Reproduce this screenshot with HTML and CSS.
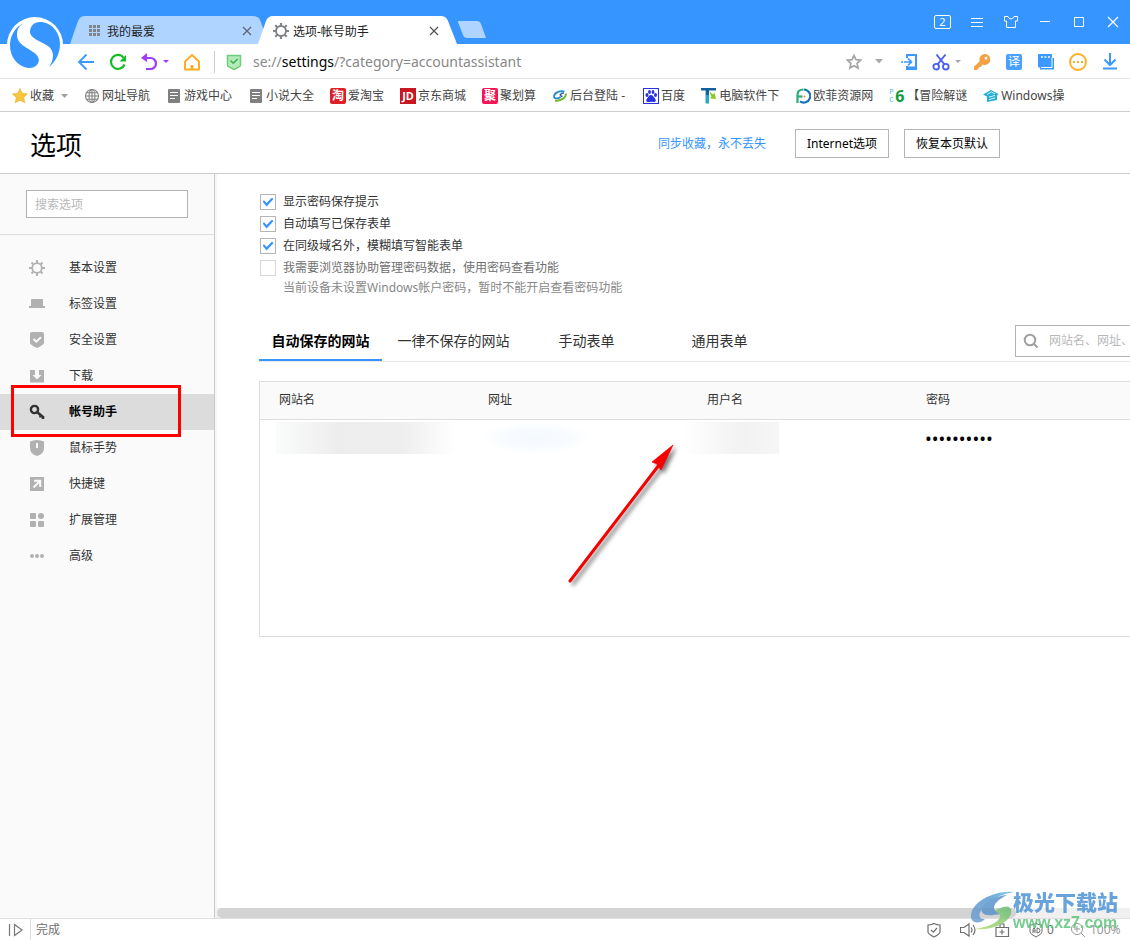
FILE: index.html
```html
<!DOCTYPE html>
<html lang="zh-CN">
<head>
<meta charset="utf-8">
<meta name="viewport" content="width=device-width, initial-scale=1">
<title>选项-帐号助手</title>
<link rel="stylesheet" href="styles.css">
</head>
<body>
<div class="browser">
  <header class="titlebar">
    <svg class="logo" viewBox="0 0 70 76" aria-hidden="true">
      <circle cx="35" cy="45" r="28" fill="#fff"/>
      <path fill="#3695ff" d="M24 23C15 27 10 36 10 45C10 57 17 66 28 68C36 69 41 62 38 57C34 49 17 47 17 35C17 29 19 26 24 23Z"/>
      <path fill="#3695ff" d="M40 22C51 22 60 32 60 44C60 53 56 61 49 67C54 60 55 51 48 46C40 41 30 38 30 32C30 26 34 22 40 22Z"/>
    </svg>
    <nav class="tabs" aria-label="标签页">
      <div class="tab">
        <svg class="tab-shape" viewBox="0 0 195 28" preserveAspectRatio="none"><path fill="#afd4ff" d="M0 28L8 5Q10 0 15 0H183Q188 0 190 4L195 17V28Z"/></svg>
        <svg class="tab-icon" viewBox="0 0 16 16" fill="#808488"><path d="M2 2h3v3H2zM6 2h3v3H6zM10 2h3v3h-3zM2 6h3v3H2zM6 6h3v3H6zM10 6h3v3h-3zM2 10h3v3H2zM6 10h3v3H6zM10 10h3v3h-3z"/></svg>
        <span class="tab-title">我的最爱</span>
        <button class="tab-close" aria-label="关闭"><svg viewBox="0 0 10 10"><path d="M1 1l8 8M9 1L1 9" stroke="#606468" stroke-width="1.200" fill="none"/></svg></button>
      </div>
      <div class="tab tab-active">
        <svg class="tab-shape" viewBox="0 0 199 28" preserveAspectRatio="none"><path fill="#fff" d="M0 28L8 5Q10 0 15 0H183Q188 0 190 5L199 28Z"/></svg>
        <svg class="tab-icon" viewBox="0 0 16 16"><use href="#gear"/></svg>
        <span class="tab-title">选项-帐号助手</span>
        <button class="tab-close" aria-label="关闭"><svg viewBox="0 0 10 10"><path d="M1 1l8 8M9 1L1 9" stroke="#505050" stroke-width="1.200" fill="none"/></svg></button>
      </div>
      <button class="new-tab" aria-label="新标签页"><svg viewBox="0 0 28 18"><path fill="#afd4ff" d="M0 0H19Q22 0 23 3L28 17H9Q6 17 5 14L0 1Z"/></svg></button>
    </nav>
    <div class="window-controls">
      <button class="win-count">2</button>
      <button aria-label="菜单"><svg viewBox="0 0 16 16"><path d="M2 4.500h12M2 8.500h12M2 12.500h12" stroke="#fff" fill="none"/></svg></button>
      <button aria-label="皮肤"><svg viewBox="0 0 16 16"><path d="M1.500 2.500H5Q6 5 8 5T11 2.500h3.500V7h-2v6.500h-9V7h-2z" stroke="#fff" fill="none"/></svg></button>
      <button aria-label="最小化"><svg viewBox="0 0 16 16"><path d="M3 7.500h10" stroke="#fff"/></svg></button>
      <button aria-label="最大化"><svg viewBox="0 0 16 16"><path d="M3.500 3.500h9v9h-9z" stroke="#fff" fill="none"/></svg></button>
      <button aria-label="关闭窗口"><svg viewBox="0 0 16 16"><path d="M3 3l10 10M13 3L3 13" stroke="#fff" stroke-width="1.200" fill="none"/></svg></button>
    </div>
  </header>

  <div class="toolbar">
    <button class="tool" aria-label="后退"><svg viewBox="0 0 18 18"><path d="M17 9H2M9.500 1.500L2 9l7.500 7.500" stroke="#3b98ff" stroke-width="1.800" fill="none"/></svg></button>
    <button class="tool" aria-label="刷新"><svg viewBox="0 0 18 18"><path d="M15.500 11.500A7 7 0 1 1 14.500 4.600" stroke="#12bd25" stroke-width="2.200" fill="none"/><path d="M17 2v6.500h-6.500z" fill="#12bd25"/></svg></button>
    <button class="tool tool-undo" aria-label="撤销"><svg viewBox="0 0 18 18"><path d="M4 5h6.500a5.500 5.500 0 0 1 0 11H6" stroke="#a13cf5" stroke-width="2.200" fill="none"/><path d="M1 5l6-5v9z" fill="#a13cf5"/></svg><svg class="caret" viewBox="0 0 6 4"><path d="M0 0h6L3 3z" fill="#a13cf5"/></svg></button>
    <button class="tool" aria-label="主页"><svg viewBox="0 0 18 18"><path d="M2 8.500L9 2l7 6.500V16.500H2z" stroke="#ffae22" stroke-width="2" fill="none" stroke-linejoin="round"/><path d="M7.500 12h3v5h-3z" fill="#ffae22"/></svg></button>
    <span class="divider"></span>
    <svg class="safe" viewBox="0 0 16 16"><path d="M1.500 1.500h13V11q0 1-1 1.600L8 15.500l-5.500-2.900q-1-.6-1-1.600z" fill="#b5eab9" stroke="#6fce7b" stroke-width="1.500"/><path d="M4.500 6.500l2.700 2.700L11.700 5" stroke="#43b154" stroke-width="1.600" fill="none"/></svg>
    <div class="url" role="textbox" aria-label="地址">se://<b>settings</b>/?category=accountassistant</div>
    <button class="tool tool-star" aria-label="收藏"><svg viewBox="0 0 18 18"><path d="M9 2.500l2 4.200 4.600.5-3.500 3.200 1 4.600L9 12.700 4.900 15l1-4.600-3.500-3.200 4.600-.5z" fill="none" stroke="#a5a5a5" stroke-width="1.700"/></svg></button>
    <button class="tool tool-caret" aria-label="更多收藏"><svg class="caret-big" viewBox="0 0 8 5"><path d="M0 0h8L4 4.500z" fill="#a8a8a8"/></svg></button>
    <button class="tool" aria-label="发送到手机"><svg viewBox="0 0 18 18"><path d="M7 5V2h9v14H7v-3" stroke="#3b98ff" stroke-width="2" fill="none"/><path d="M1 9h2M4 9h7M8 5.500L11.500 9 8 12.500" stroke="#3b98ff" stroke-width="1.700" fill="none"/><path d="M7 14.500h9" stroke="#3b98ff" stroke-width="2"/></svg></button>
    <button class="tool tool-cut" aria-label="截图"><svg viewBox="0 0 18 18"><path d="M4.500 1.500l8 10M13.500 1.500l-8 10" stroke="#4860f3" stroke-width="2" fill="none"/><circle cx="4.200" cy="13.700" r="2.800" stroke="#4860f3" stroke-width="1.900" fill="none"/><circle cx="13.800" cy="13.700" r="2.800" stroke="#4860f3" stroke-width="1.900" fill="none"/></svg><svg class="caret" viewBox="0 0 6 4"><path d="M0 0h6L3 3z" fill="#a8a8a8"/></svg></button>
    <button class="tool" aria-label="密码"><svg viewBox="0 0 18 18"><path fill-rule="evenodd" d="M11.500 1a5.500 5.500 0 1 1-1.800 10.600L7.500 14H6v1.500H4.500V17H1v-3.200l5.700-5.600A5.500 5.500 0 0 1 11.500 1zm1.500 2.700a1.500 1.500 0 1 0 .1 3 1.500 1.500 0 0 0-.1-3z" fill="#f3a141"/></svg></button>
    <button class="tool" aria-label="翻译"><span class="translate">译</span></button>
    <button class="tool" aria-label="多窗口"><svg viewBox="0 0 18 18"><path d="M3 5v11.500h14V5z" fill="#3b98ff"/><rect x="1" y="1" width="14" height="13.500" rx="1" fill="#3b98ff"/><path d="M15 4.500v10H4" stroke="#fff" fill="none"/><path d="M4 3h2v2H4zM7.500 3h2v2h-2zM11 3h2v2h-2z" fill="#c9e2ff"/></svg></button>
    <button class="tool" aria-label="更多"><svg viewBox="0 0 18 18"><circle cx="9" cy="9" r="8" stroke="#ffae22" stroke-width="1.900" fill="none"/><path d="M4 8h2v2H4zM8 8h2v2H8zM12 8h2v2h-2z" fill="#ffae22"/></svg></button>
    <button class="tool" aria-label="下载"><svg viewBox="0 0 18 18"><path d="M9 0v12M3.500 6.500L9 12l5.500-5.500M2 15.500h14" stroke="#3b98ff" stroke-width="2" fill="none"/></svg></button>
  </div>

  <nav class="bookmarks" aria-label="收藏栏">
    <a class="bookmark" href="#"><svg viewBox="0 0 16 16"><path d="M8 .5l2.300 4.800 5.200.6-3.800 3.600 1 5.300L8 12.200l-4.700 2.600 1-5.300L.5 5.900l5.200-.6z" fill="#f7c63c" stroke="#e9b23c" stroke-width=".7"/></svg>收藏<svg class="bookmark-caret" viewBox="0 0 7 5"><path d="M0 0h7L3.500 4z" fill="#a0a0a0"/></svg></a>
    <a class="bookmark" href="#"><svg viewBox="0 0 16 16" fill="none" stroke="#808080" stroke-width="1.100"><circle cx="8" cy="8" r="6.500"/><ellipse cx="8" cy="8" rx="3" ry="6.500"/><path d="M8 1.500v13M1.500 8h13M2.500 4.700h11M2.500 11.300h11"/></svg>网址导航</a>
    <a class="bookmark" href="#"><svg viewBox="0 0 16 16"><use href="#doc"/></svg>游戏中心</a>
    <a class="bookmark" href="#"><svg viewBox="0 0 16 16"><use href="#doc"/></svg>小说大全</a>
    <a class="bookmark" href="#"><span class="badge badge-tao">淘</span>爱淘宝</a>
    <a class="bookmark" href="#"><span class="badge badge-jd">JD</span>京东商城</a>
    <a class="bookmark" href="#"><span class="badge badge-ju">聚</span>聚划算</a>
    <a class="bookmark bookmark-admin" href="#"><svg viewBox="0 0 16 16" fill="none"><path d="M12.500 3.500C8 2 2 5 2 8.500c0 2.500 4 2.500 6.500.5" stroke="#258ed0" stroke-width="1.800"/><path d="M13.500 5.500C15 9 9 13.500 3 12.500" stroke="#75b72c" stroke-width="2"/><path d="M12 5C8 5 7 8 10.500 8.500" stroke="#285da3" stroke-width="1.500"/></svg>后台登陆 -</a>
    <a class="bookmark" href="#"><svg viewBox="0 0 16 16"><rect x=".5" y=".5" width="15" height="15" fill="#fff" stroke="#2932e1"/><g fill="#2932e1"><ellipse cx="4" cy="7" rx="1.500" ry="2"/><ellipse cx="6.500" cy="4" rx="1.400" ry="2"/><ellipse cx="10" cy="4" rx="1.400" ry="2"/><ellipse cx="12.500" cy="7" rx="1.500" ry="2"/><path d="M8 7c2 0 2.500 2 4 3.500s.8 4-1.500 3.500q-2.500-.6-5 0C3.200 14.500 2.500 12 4 10.500S6 7 8 7z"/></g></svg>百度</a>
    <a class="bookmark" href="#"><svg viewBox="0 0 16 16"><path d="M4.500 1H8v14.500H4.500z" fill="#2aa5c9"/><path d="M0 0h15v2.500H8V7H5V2.500H0z" fill="#14609f"/><path d="M8 3l4 3.500 1.500-2L15 11l-6-.5 1.500-2z" fill="#86cc24"/></svg>电脑软件下</a>
    <a class="bookmark" href="#"><svg viewBox="0 0 16 16" fill="none" stroke-width="2.200"><path d="M2.500 15V7q0-5.500 6-5.500" stroke="#29ae79"/><path d="M9 1.500A6.500 6.500 0 1 1 5 13.300" stroke="#1674b7"/><path d="M3 8.500h4.500" stroke="#29ae79"/><circle cx="9.500" cy="8.500" r="1" fill="#f18220" stroke="none"/></svg>欧菲资源网</a>
    <a class="bookmark" href="#"><span class="pc6"><small><span>P</span><span>C</span></small><b>6</b></span>【冒险解谜</a>
    <a class="bookmark" href="#"><svg viewBox="0 0 16 16"><path d="M0 6.500L8 2l7.500 4-1.500 1.500v4.500l-10 2V8.500z" fill="#26add9"/><path d="M4 6.500L8.500 4 12 6M6 9l6-1.500M6 11.500l6-1.500" stroke="#d9f6ff" fill="none"/></svg>Windows操</a>
  </nav>

  <div class="page-head">
    <div class="page-head-inner">
      <h1>选项</h1>
      <a class="sync" href="#">同步收藏，永不丢失</a>
      <button class="button">Internet选项</button>
      <button class="button">恢复本页默认</button>
    </div>
  </div>

  <div class="page">
    <aside class="sidebar">
      <div class="side-search"><input type="search" placeholder="搜索选项" aria-label="搜索选项"></div>
      <nav class="side-nav">
        <a href="#"><svg viewBox="0 0 16 16"><use href="#gear-light"/></svg>基本设置</a>
        <a href="#"><svg viewBox="0 0 16 16"><path d="M2 4Q2 3 3 3h10q1 0 1 1v6h2v2H0v-2h2z"/></svg>标签设置</a>
        <a href="#"><svg viewBox="0 0 16 16"><path d="M1 2Q1 0 3 0h10q2 0 2 2v9q0 1.500-7 5Q1 12.500 1 11z"/><path d="M4.500 7l2.700 2.700L12 5.300" stroke="#fafafa" stroke-width="2" fill="none"/></svg>安全设置</a>
        <a href="#"><svg viewBox="0 0 16 16"><path d="M1 2h5v5H3.500L8 11.500 12.500 7H10V2h5v12.500H1z"/></svg>下载</a>
        <a class="selected" href="#"><svg viewBox="0 0 16 16"><circle cx="5.500" cy="5.500" r="3.600" fill="none" stroke="#333" stroke-width="2.400"/><path d="M8 8l6.500 5.500M11.500 10.500v3M14 12v3" stroke="#333" stroke-width="2.600" fill="none"/></svg>帐号助手<span class="highlight"></span></a>
        <a href="#"><svg viewBox="0 0 16 16"><path d="M1 1.500Q8-1.500 15 1.500V8q0 6-7 8-7-2-7-8z"/><path d="M7 3h2v5H7z" fill="#fafafa"/></svg>鼠标手势</a>
        <a href="#"><svg viewBox="0 0 16 16"><path d="M1 1h14v14H1z"/><path d="M4.500 11.500l6-6M5 4.800h6.200V11" stroke="#fafafa" stroke-width="2" fill="none"/></svg>快捷键</a>
        <a href="#"><svg viewBox="0 0 16 16"><rect x="1" y="1" width="6" height="6" rx="1"/><circle cx="12" cy="4" r="3"/><rect x="1" y="9" width="6" height="6" rx="1"/><rect x="9" y="9" width="6" height="6" rx="1"/></svg>扩展管理</a>
        <a href="#"><svg viewBox="0 0 16 16"><circle cx="3" cy="8" r="2"/><circle cx="8" cy="8" r="2"/><circle cx="13" cy="8" r="2"/></svg>高级</a>
      </nav>
    </aside>

    <main class="main">
      <div class="content">
        <div class="options">
          <label class="option"><input type="checkbox" checked>显示密码保存提示</label>
          <label class="option"><input type="checkbox" checked>自动填写已保存表单</label>
          <label class="option"><input type="checkbox" checked>在同级域名外，模糊填写智能表单</label>
          <label class="option option-off"><input type="checkbox" disabled>我需要浏览器协助管理密码数据，使用密码查看功能</label>
          <p class="hint">当前设备未设置Windows帐户密码，暂时不能开启查看密码功能</p>
        </div>
        <div class="panel-tabs">
          <button class="panel-tab current">自动保存的网站</button>
          <button class="panel-tab">一律不保存的网站</button>
          <button class="panel-tab">手动表单</button>
          <button class="panel-tab">通用表单</button>
          <label class="site-search"><svg viewBox="0 0 16 16"><circle cx="7" cy="7" r="5.300" fill="none" stroke="#a0a0a0" stroke-width="2"/><path d="M11 11l3.500 3.500" stroke="#a0a0a0" stroke-width="2"/></svg><input type="search" placeholder="网站名、网址、" aria-label="搜索网站"></label>
        </div>
        <div class="sites">
          <table>
            <colgroup><col class="col-name"><col class="col-url"><col class="col-user"><col></colgroup>
            <thead><tr><th>网站名</th><th>网址</th><th>用户名</th><th>密码</th></tr></thead>
            <tbody><tr><td><div class="masked masked-name"></div></td><td><div class="masked masked-url"></div></td><td><div class="masked masked-user"></div></td><td class="dots">••••••••••</td></tr></tbody>
          </table>
        </div>
      </div>
      <svg class="arrow" viewBox="0 0 120 150" aria-hidden="true">
        <path d="M10 141L99 25" stroke="#f60000" stroke-width="3" stroke-linecap="round"/>
        <path d="M113 5L92 22L97 24L101 30Z" fill="#f60000" stroke="#f60000" stroke-width=".7"/>
      </svg>
      <div class="scrollbar"><div class="thumb"></div></div>
    </main>
  </div>

  <footer class="status">
    <button class="play" aria-label="侧边栏"><svg viewBox="0 0 16 16"><path d="M1.500 2v12M6.500 2.500L14 8l-7.500 5.500z" stroke="#777" stroke-width="1.200" fill="none"/></svg></button>
    <span class="status-text">完成</span>
    <button class="status-tool" aria-label="安全"><svg viewBox="0 0 16 16"><path d="M2 3Q5 3 8 1.500 11 3 14 3v7q0 2-6 5-6-3-6-5zM5 8l2.300 2.200L11 6" stroke="#707070" stroke-width="1.200" fill="none"/></svg></button>
    <button class="status-tool" aria-label="声音"><svg viewBox="0 0 16 16"><path d="M.500 5.500H4L9 2v12l-5-3.500H.500zM11 5.500q2 2.500 0 5M13 3q4 5 0 10" stroke="#707070" stroke-width="1.200" fill="none"/></svg></button>
    <button class="status-tool" aria-label="工具箱"><svg viewBox="0 0 16 16"><path d="M2 5.500h12.500v9H2zM6 5V2h4v3M8 7.500v5M5.500 10h5" stroke="#707070" stroke-width="1.200" fill="none"/></svg></button>
    <button class="status-tool ad" aria-label="广告拦截"><svg viewBox="0 0 16 16"><path d="M2 3Q5 3 8 1.500 11 3 14 3v7q0 2-6 5-6-3-6-5zM5 11V7q1-2 2 0v4M5 9h2M9 6v5q3 0 3-2.500T9 6z" stroke="#707070" fill="none"/></svg>0</button>
    <button class="status-tool zoom" aria-label="缩放"><svg viewBox="0 0 16 16"><path d="M11 11l4 4M7 4v6M4 7h6" stroke="#999" fill="none"/><circle cx="7" cy="7" r="5.500" stroke="#999" fill="none"/></svg>100%</button>
  </footer>

  <div class="watermark">
    <svg viewBox="0 0 46 42" aria-hidden="true">
      <defs><linearGradient id="wm-blue" x1="0" y1="1" x2="1" y2="0"><stop offset="0" stop-color="#6d9fcf"/><stop offset=".6" stop-color="#5f9ad2"/><stop offset="1" stop-color="#65c6ef"/></linearGradient><linearGradient id="wm-green" x1="0" y1="1" x2="1" y2="0"><stop offset="0" stop-color="#b7de75"/><stop offset="1" stop-color="#67bd76"/></linearGradient></defs>
      <path d="M44 2C24 0 2 12 1 25C0 33 9 35 15 29C8 30 8 23 13 18C21 9 32 4 44 2Z" fill="url(#wm-blue)"/>
      <path d="M33 17C43 14 44 24 36 31C27 38 15 40 5 39C18 37 29 32 30 27C31 23 25 23 20 23C24 22 28 18 33 17Z" fill="url(#wm-green)"/>
      <path d="M37 5C23 6 9 16 12 22C14 27 24 25 30 24C20 20 23 12 37 5Z" fill="#5b93c9"/>
    </svg>
    <div class="watermark-text"><strong>极光下载站</strong><span>www.xz7.com</span></div>
  </div>
</div>

<svg class="symbols" aria-hidden="true">
  <symbol id="gear" viewBox="0 0 16 16"><circle cx="8" cy="8" r="5" fill="none" stroke="#808488" stroke-width="2"/><path d="M8 0v3M8 13v3M0 8h3M13 8h3M2.300 2.300l2.200 2.200M11.500 11.500l2.200 2.200M2.300 13.700l2.200-2.200M11.500 4.500l2.200-2.200" stroke="#808488" stroke-width="2.200"/></symbol>
  <symbol id="gear-light" viewBox="0 0 16 16"><circle cx="8" cy="8" r="4.800" fill="none" stroke="#b1b1b1" stroke-width="1.800"/><path d="M8 0v3M8 13v3M0 8h3M13 8h3M2.500 2.500l2 2M11.500 11.500l2 2M2.500 13.500l2-2M11.500 4.500l2-2" stroke="#b1b1b1" stroke-width="1.900"/></symbol>
  <symbol id="doc" viewBox="0 0 16 16"><rect x="2" y="1" width="12" height="14" rx="1" fill="#808080"/><path d="M4 4.500h8M4 7.500h8M4 10.500h5" stroke="#fff"/></symbol>
</svg>
</body>
</html>
```
FILE: styles.css
```css
* {
  box-sizing: border-box;
}

body {
  margin: 0;
  font: 12px/18px "Noto Sans", "Noto Sans CJK SC", sans-serif;
  color: #333;
  background: #fff;
}

button {
  margin: 0;
  padding: 0;
  border: 0;
  background: none;
  font: inherit;
  color: inherit;
}

input {
  font: inherit;
}

a {
  color: inherit;
  text-decoration: none;
}

svg {
  display: block;
  flex: none;
}

.symbols {
  position: absolute;
  width: 0;
  height: 0;
}

.browser {
  position: relative;
  display: flex;
  flex-direction: column;
  height: 100vh;
  overflow: hidden;
}

/* Title bar */
.titlebar {
  position: relative;
  display: flex;
  align-items: flex-end;
  justify-content: space-between;
  height: 44px;
  flex: none;
  padding-left: 70px;
  background: #3695ff;
}

.logo {
  position: absolute;
  left: 0;
  top: 0;
  z-index: 2;
  width: 70px;
  height: 76px;
}

.tabs {
  display: flex;
}

.tab {
  position: relative;
  display: flex;
  align-items: center;
  width: 195px;
  height: 28px;
  padding: 2px 13px 0 17px;
  color: #222;
}

.tab-active {
  width: 199px;
  margin-left: -7px;
  padding: 2px 18px 0 15px;
}

.tab-shape {
  position: absolute;
  left: 0;
  top: 0;
  width: 100%;
  height: 100%;
}

.tab-icon,
.tab-title,
.tab-close {
  position: relative;
}

.tab-icon {
  width: 16px;
  height: 16px;
}

.tab-title {
  flex: 1;
  margin-left: 4px;
  padding-top: 2px;
}

.tab-close svg {
  width: 10px;
  height: 10px;
}

.new-tab {
  align-self: flex-start;
  padding: 5px 0 0 1px;
}

.new-tab svg {
  width: 28px;
  height: 18px;
}

.window-controls {
  display: flex;
  height: 44px;
}

.window-controls button {
  display: flex;
  align-items: center;
  justify-content: center;
  width: 34px;
}

.window-controls svg {
  width: 16px;
  height: 16px;
}

.window-controls .win-count {
  align-self: center;
  width: 17px;
  height: 14px;
  margin-right: 9px;
  border: 1px solid #fff;
  border-radius: 2px;
  color: #fff;
  font-size: 11px;
  line-height: 12px;
}

/* Toolbar */
.toolbar {
  display: flex;
  align-items: center;
  flex: none;
  height: 35px;
  padding: 1px 4px 0 70px;
  border-bottom: 1px solid #e5e5e5;
}

.tool {
  display: flex;
  align-items: center;
  justify-content: center;
  width: 32px;
  height: 32px;
}

.tool svg {
  width: 18px;
  height: 18px;
}

.tool .caret {
  width: 6px;
  height: 4px;
}

.tool .caret-big {
  width: 8px;
  height: 5px;
}

.tool-undo {
  justify-content: flex-start;
  gap: 5px;
  width: 42px;
  padding-left: 6px;
}

.tool-cut {
  justify-content: flex-start;
  gap: 5px;
  width: 41px;
  padding-left: 7px;
}

.tool-star {
  width: 22px;
}

.tool-caret {
  width: 28px;
}

.divider {
  width: 1px;
  height: 22px;
  margin: 0 11px 0 6px;
  background: #ccc;
}

.safe {
  width: 16px;
  height: 16px;
}

.url {
  flex: 1;
  margin-left: 11px;
  font-size: 14px;
  line-height: 20px;
  color: #888;
  white-space: nowrap;
}

.url b {
  font-weight: normal;
  color: #000;
}

.translate {
  width: 16px;
  height: 16px;
  border-radius: 2px;
  background: #4a9fff;
  color: #fff;
  line-height: 16px;
}

/* Bookmarks */
.bookmarks {
  display: flex;
  align-items: center;
  gap: 16px;
  flex: none;
  height: 33px;
  padding: 2px 0 0 12px;
  border-bottom: 1px solid #ccc;
  overflow: hidden;
  white-space: nowrap;
  color: #444;
}

.bookmark {
  display: flex;
  align-items: center;
  gap: 2px;
}

.bookmark svg {
  width: 16px;
  height: 16px;
}

.bookmark .bookmark-caret {
  width: 7px;
  height: 5px;
  margin-left: 5px;
}

.bookmark-admin {
  padding-right: 2px;
}

.badge {
  width: 16px;
  height: 16px;
  border-radius: 2px;
  color: #fff;
  font-weight: bold;
  line-height: 16px;
  text-align: center;
}

.badge-tao {
  background: #de1f27;
}

.badge-jd {
  border-radius: 0;
  background: #c81623;
  font-size: 11px;
}

.badge-ju {
  background: #f31554;
}

.pc6 {
  display: flex;
  align-items: center;
  gap: 1px;
  width: 16px;
  height: 18px;
}

.pc6 small {
  display: flex;
  flex-direction: column;
  width: 5px;
  font-size: 7px;
  line-height: 8px;
  color: #52b9ec;
}

.pc6 b {
  font-size: 16px;
  color: #119a39;
}

/* Page heading */
.page-head {
  flex: none;
  border-bottom: 1px solid #ccc;
}

.page-head-inner {
  display: flex;
  align-items: center;
  max-width: 1000px;
  height: 61px;
  padding: 2px 0 0 30px;
}

h1 {
  flex: 1;
  margin: 0;
  padding-top: 2px;
  font-size: 26px;
  font-weight: normal;
  line-height: 36px;
  color: #000;
}

.sync {
  margin-right: 14px;
  color: #3695ff;
}

.button {
  height: 29px;
  margin-left: 15px;
  padding: 0 11px;
  border: 1px solid #b5b5b5;
  background: #fff;
  color: #000;
}

/* Sidebar */
.page {
  display: flex;
  flex: 1;
  min-height: 0;
}

.sidebar {
  flex: none;
  width: 215px;
  border-right: 1px solid #ccc;
  background: #fafafa;
}

.side-search {
  padding: 16px 26px;
  border-bottom: 1px solid #ddd;
}

.side-search input {
  display: block;
  width: 100%;
  height: 28px;
  padding: 0 8px;
  border: 1px solid #b2b2b2;
  border-radius: 0;
  outline: 0;
  background: #fff;
}

input::placeholder {
  color: #b8b8b8;
  opacity: 1;
}

.side-nav {
  padding-top: 15px;
}

.side-nav a {
  position: relative;
  display: flex;
  align-items: center;
  gap: 24px;
  height: 36px;
  padding-left: 29px;
}

.side-nav svg {
  width: 16px;
  height: 16px;
  fill: #b1b1b1;
}

.side-nav .selected {
  background: #dcdcdc;
  color: #000;
  font-weight: bold;
}

.highlight {
  position: absolute;
  left: 11px;
  top: -9px;
  z-index: 1;
  width: 170px;
  height: 52px;
  border: 3px solid #f00;
}

/* Settings */
.main {
  position: relative;
  display: flex;
  flex: 1;
  flex-direction: column;
  justify-content: space-between;
  min-width: 0;
  overflow: hidden;
  box-shadow: inset 2px 0 #f5f5f5;
}

.content {
  min-width: 1045px;
  padding: 17px 0 0 44px;
}

.options {
  display: flex;
  flex-direction: column;
  align-items: flex-start;
}

.option {
  display: flex;
  align-items: center;
  gap: 7px;
  height: 22px;
  padding-left: 1px;
  line-height: 20px;
}

.option input {
  appearance: none;
  display: grid;
  place-items: center;
  width: 16px;
  height: 16px;
  margin: 0;
  border: 1px solid #b5b5b5;
  background: #fff;
}

.option input:checked::before {
  content: "";
  width: 11px;
  height: 9px;
  background: #3695ff;
  clip-path: polygon(0 45%, 14% 30%, 38% 60%, 86% 0, 100% 16%, 38% 100%);
}

.option input:disabled {
  border-color: #d8d8d8;
}

.option-off {
  color: #707070;
}

.hint {
  margin: 0;
  padding-left: 24px;
  color: #888;
}

.panel-tabs {
  display: flex;
  gap: 10px;
  height: 39px;
  margin-top: 26px;
  border-bottom: 1px solid #e8e8e8;
}

.panel-tab {
  width: 123px;
  height: 38px;
  border-bottom: 2px solid transparent;
  font-size: 14px;
}

.panel-tab.current {
  border-color: #3695ff;
  font-weight: bold;
  color: #000;
}

.site-search {
  display: flex;
  align-items: center;
  gap: 10px;
  width: 245px;
  height: 32px;
  margin: 2px 0 0 auto;
  padding: 0 7px;
  border: 1px solid #b2b2b2;
}

.site-search svg {
  width: 16px;
  height: 16px;
}

.site-search input {
  flex: 1;
  min-width: 0;
  padding: 0;
  border: 0;
  outline: 0;
}

.sites {
  height: 256px;
  margin-top: 19px;
  border: 1px solid #ddd;
}

table {
  width: 100%;
  border-collapse: collapse;
  table-layout: fixed;
}

.col-name {
  width: 209px;
}

.col-url,
.col-user {
  width: 219px;
}

th {
  height: 37px;
  padding: 0 19px;
  border-bottom: 1px solid #ddd;
  background: #fafafa;
  font-weight: normal;
  text-align: left;
}

td {
  height: 38px;
  padding: 0;
}

.masked {
  height: 32px;
}

.masked-name {
  width: 180px;
  margin-left: 16px;
  background: linear-gradient(90deg, #fafcfb, #ededed 34%, #eee 70%, #fff);
}

.masked-url {
  width: 110px;
  margin-left: 12px;
  background: radial-gradient(closest-side, #f4f9ff, #f8fbff 60%, #fff);
}

.masked-user {
  width: 96px;
  margin-left: -5px;
  background: linear-gradient(90deg, #fff, #f2f2f2 60%, #f6f6f6);
}

td.dots {
  padding-left: 18px;
  font-size: 18px;
  color: #000;
}

.arrow {
  position: absolute;
  left: 345px;
  top: 266px;
  width: 120px;
  height: 150px;
  filter: drop-shadow(3px 3px 2px #0008);
}

.scrollbar {
  height: 10px;
  padding-left: 2px;
  background: #f0f0f0;
}

.thumb {
  width: 87.5%;
  height: 10px;
  border-radius: 5px;
  background: #d3d3d3;
}

/* Status bar */
.status {
  display: flex;
  align-items: center;
  flex: none;
  height: 22px;
  padding-right: 8px;
  border-top: 1px solid #e0e0e0;
  color: #707070;
}

.play {
  width: 31px;
  height: 21px;
  padding-left: 8px;
  border-right: 1px solid #ddd;
}

.status svg {
  width: 16px;
  height: 16px;
}

.status-text {
  flex: 1;
  padding-left: 5px;
}

.status-tool {
  display: flex;
  align-items: center;
  width: 34px;
  padding-left: 8px;
}

.status .ad {
  gap: 3px;
  width: 42px;
}

.status .zoom {
  gap: 4px;
  width: 60px;
  color: #999;
}

.watermark {
  position: absolute;
  right: 12px;
  bottom: 8px;
  z-index: 3;
  display: flex;
  opacity: 0.85;
}

.watermark svg {
  width: 46px;
  height: 42px;
}

.watermark-text {
  display: flex;
  flex-direction: column;
  margin-left: -3px;
  font-weight: bold;
}

.watermark strong {
  font-size: 21px;
  line-height: 24px;
  color: #4f94d5;
}

.watermark span {
  font: bold 16px/18px "Liberation Sans", sans-serif;
  color: #5fc47c;
}
```
